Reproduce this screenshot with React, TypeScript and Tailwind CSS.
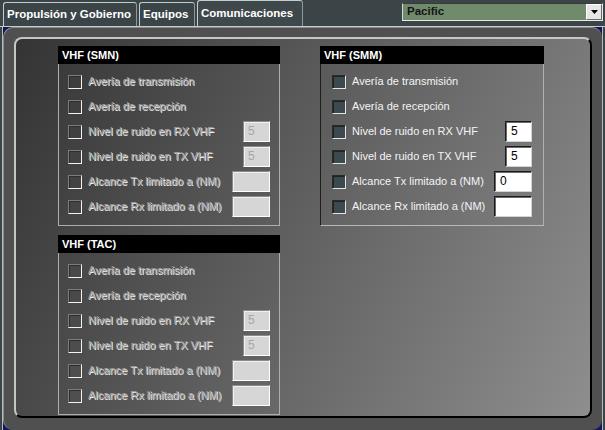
import React from "react";

type RowDef = { label: string; input?: "small" | "wide"; value?: string };

const rows: RowDef[] = [
  { label: "Avería de transmisión" },
  { label: "Avería de recepción" },
  { label: "Nivel de ruido en RX VHF", input: "small", value: "5" },
  { label: "Nivel de ruido en TX VHF", input: "small", value: "5" },
  { label: "Alcance Tx limitado a (NM)", input: "wide", value: "" },
  { label: "Alcance Rx limitado a (NM)", input: "wide", value: "" },
];

function Row({ def, enabled, pl, pr }: { def: RowDef; enabled: boolean; pl: string; pr: string }) {
  return (
    <div className={`flex items-center h-[25px] ${pl} ${pr}`}>
      {enabled ? (
        <span className="w-[14px] h-[14px] shrink-0 bg-[#3c4a4f] border border-t-[#2a2a2a] border-l-[#2a2a2a] border-b-[#e4e4e4] border-r-[#e4e4e4] shadow-[inset_1px_1px_0_#1c2426]" />
      ) : (
        <span className="w-[14px] h-[14px] shrink-0 border border-t-[#7c7c7c] border-l-[#7c7c7c] border-b-[#f2f2f2] border-r-[#f2f2f2] shadow-[inset_1px_1px_0_#2e2e2e]" />
      )}
      <span
        className={
          enabled
            ? "ml-[6px] text-[11px] leading-none whitespace-nowrap text-[#f4f4f4]"
            : "ml-[6px] text-[11px] leading-none whitespace-nowrap text-[#a4a4a4] [text-shadow:1px_1px_0_#ececec]"
        }
      >
        {def.label}
      </span>
      {def.input && (
        <span
          className={
            (def.input === "small" ? "w-[27px] " : "w-[38px] ") +
            (enabled
              ? "ml-auto h-[21px] bg-white border border-t-[#1a1a1a] border-l-[#1a1a1a] border-b-[#d4d4d4] border-r-[#d4d4d4] shadow-[inset_1px_1px_0_#6a6a6a] text-[12px] leading-[19px] text-black pl-[5px]"
              : "ml-auto h-[21px] bg-[#d6d6d6] border border-t-[#8a8a8a] border-l-[#8a8a8a] border-b-white border-r-white shadow-[inset_1px_1px_0_#f0f0f0] text-[12px] leading-[19px] text-[#a6a6a6] pl-[4px]")
          }
        >
          {enabled && def.label.startsWith("Alcance Tx") ? "0" : def.value}
        </span>
      )}
    </div>
  );
}

function Panel({ title, enabled, w }: { title: string; enabled: boolean; w: string }) {
  return (
    <div
      className={`${w} border-r border-b ${
        enabled ? "border-l border-l-[#1e1e1e] border-r-[#b0b0b0] border-b-[#b8b8b8]" : "border-l border-[#adadad]"
      }`}
    >
      <div className="h-[18px] bg-black text-white font-bold text-[11px] leading-[18px] pl-[4px] -ml-px -mr-px">
        {title}
      </div>
      <div className="pt-[5px] pb-[6px]">
        {rows.map((r, i) => (
          <Row
            key={i}
            def={r}
            enabled={enabled}
            pl={enabled ? "pl-[11px]" : "pl-[9px]"}
            pr={enabled ? "pr-[11px]" : "pr-[9px]"}
          />
        ))}
      </div>
    </div>
  );
}

function Tab({ label, active, w }: { label: string; active?: boolean; w: string }) {
  return (
    <div
      className={`${w} ${
        active ? "h-[26px] bg-[#3f494c]" : "h-[24px] bg-[#3b4548]"
      } border-l border-t border-r border-l-[#c4cccc] border-t-[#c4cccc] border-r-[#8e9898] rounded-t-[3px] flex items-center pl-[3px] text-white font-bold text-[11.5px] whitespace-nowrap`}
    >
      {label}
    </div>
  );
}

export default function App() {
  return (
    <div className="w-[605px] h-[430px] bg-[#3b4548] flex flex-col overflow-hidden font-['Liberation_Sans',Arial,sans-serif]">
      <div className="h-[26px] flex shrink-0">
        <div className="flex items-end gap-[2px] pl-[3px]">
          <Tab label="Propulsión y Gobierno" w="w-[134px]" />
          <Tab label="Equipos" w="w-[56px]" />
          <Tab label="Comunicaciones" w="w-[106px]" active />
        </div>
        <div className="ml-auto mr-[2px] mt-[3px] w-[201px] h-[18px] bg-[#6f8b6b] border border-t-[#3a3a3a] border-l-[#d8d8d8] border-b-[#e8e8e8] border-r-[#e8e8e8] flex items-center">
          <span className="pl-[4px] text-[11.5px] font-bold text-[#141414]">Pacific</span>
          <span className="ml-auto w-[16px] h-[16px] bg-[#e6e6e6] border border-t-white border-l-white border-b-[#6a6a6a] border-r-[#6a6a6a] flex items-center justify-center">
            <svg width="7" height="4" viewBox="0 0 7 4">
              <polygon points="0,0 7,0 3.5,4" fill="#000" />
            </svg>
          </span>
        </div>
      </div>
      <div className="h-px bg-[#c4cccc] shrink-0" />
      <div className="flex-1 flex px-[2px]">
        <div className="flex-1 flex bg-[#16165c] border-x border-[#b4bcbc]">
          <div className="flex-1 flex rounded-[10px] bg-[#505050] border-t border-l border-t-[#8c8c8c] border-l-[#8c8c8c] pt-[9px] pl-[10px] pr-[10px] pb-[12px]">
            <div className="flex-1 flex gap-[40px] rounded-[8px] border-2 border-t-[#c6c6c6] border-l-[#c6c6c6] border-b-black border-r-black bg-[linear-gradient(115deg,#343434,#8e8e8e)] pl-[42px] pt-[7px]">
              <div className="flex flex-col gap-[9px]">
                <Panel title="VHF (SMN)" enabled={false} w="w-[222px]" />
                <Panel title="VHF (TAC)" enabled={false} w="w-[222px]" />
              </div>
              <div className="flex flex-col">
                <Panel title="VHF (SMM)" enabled w="w-[224px]" />
              </div>
            </div>
          </div>
        </div>
      </div>
    </div>
  );
}
